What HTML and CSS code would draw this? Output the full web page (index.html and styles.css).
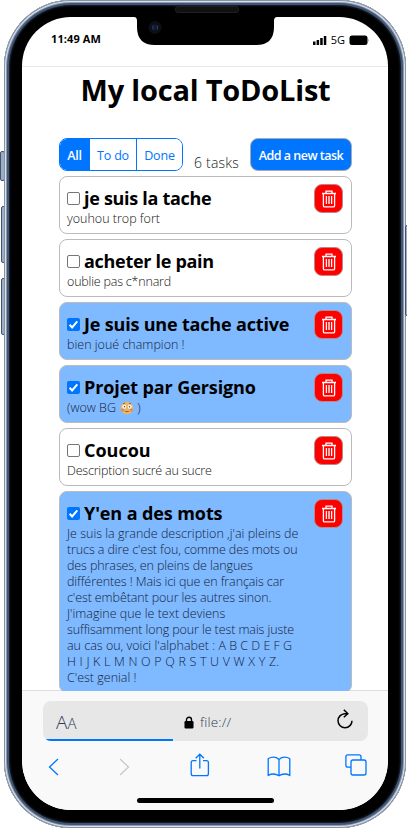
FILE: index.html
```
<!DOCTYPE html>
<html lang="fr">
<head>
<meta charset="utf-8">
<title>My local ToDoList</title>
<link rel="stylesheet" href="styles.css">
</head>
<body>
<svg class="defs" width="0" height="0">
  <symbol id="trash" viewBox="0 0 16 18"><path d="M1 3.500h14M5 3.200V1.100h6v2.100M2.400 3.500v12.200c0 .8.5 1.200 1.300 1.200h8.600c.8 0 1.300-.4 1.300-1.200V3.500M5.400 6v8M8 6v8M10.600 6v8" fill="none" stroke="#fff" stroke-width="1.300"/></symbol>
  <symbol id="check" viewBox="0 0 13 13"><path d="M2.600 6.800l2.500 2.600 5.200-6" fill="none" stroke="#fff" stroke-width="2"/></symbol>
</svg>
<i class="key mute"></i><i class="key vol-up"></i><i class="key vol-down"></i>
<div class="phone">
  <div class="speaker"></div>
  <div class="screen">
    <svg class="notch" width="143" height="29" viewBox="0 0 143 29">
      <path d="M0 0q3 0 3 4v6q0 18 18 18h101q18 0 18-18v-6q0-4 3-4z"/>
      <circle cx="21" cy="10.500" r="6.500" fill="#0c0f14"/><circle cx="21" cy="10.500" r="3.300" fill="#101a2c"/><path d="M19 8.500v4M23.500 8.500v4" stroke="#2c4070" stroke-width="1"/>
    </svg>
    <header class="status">
      <span class="time">11:49 AM</span>
      <span class="signal">
        <svg width="14" height="9" viewBox="0 0 14 9"><path d="M0 5.500h2.500V9H0zM3.600 4h2.500v5H3.600zM7.200 2h2.500v7H7.200zM10.800 0h2.500v9h-2.500z"/></svg>
        <span class="net">5G</span>
        <svg width="21" height="11" viewBox="0 0 21 11"><rect x=".5" y=".5" width="18" height="9.500" rx="2.500"/><path d="M19.300 3.500q1.500 1.700 0 3.500z" fill="#888"/></svg>
      </span>
    </header>
    <main>
      <h1>My local ToDoList</h1>
      <div class="toolbar">
        <div class="filters"><button class="on">All</button><button class="todo">To do</button><button class="done-tab">Done</button></div>
        <span class="count">6 tasks</span>
        <button class="add"><span>Add a new task</span></button>
      </div>
      <section class="list">
        <article class="card"><div class="text"><h2><i class="box"></i><span class="tight">je suis la tache</span></h2><p>youhou trop fort</p></div><button class="del"><svg width="16" height="18"><use href="#trash"/></svg></button></article>
        <article class="card"><div class="text"><h2><i class="box"></i><span class="tight">acheter le pain</span></h2><p class="snug">oublie pas c*nnard</p></div><button class="del"><svg width="16" height="18"><use href="#trash"/></svg></button></article>
        <article class="card done"><div class="text"><h2><i class="box"><svg width="13" height="13"><use href="#check"/></svg></i><span class="mid">Je suis une tache active</span></h2><p>bien joué champion !</p></div><button class="del"><svg width="16" height="18"><use href="#trash"/></svg></button></article>
        <article class="card done"><div class="text"><h2><i class="box"><svg width="13" height="13"><use href="#check"/></svg></i><span class="loose">Projet par Gersigno</span></h2><p>(wow BG <svg class="face" width="14" height="14" viewBox="0 0 14 14"><circle cx="7" cy="7" r="6.300" fill="#e9b764"/><circle cx="2.800" cy="9" r="1.700" fill="#e9865c"/><circle cx="11.200" cy="9" r="1.700" fill="#e9865c"/><circle cx="4.300" cy="5.800" r="2" fill="#fff"/><circle cx="9.700" cy="5.800" r="2" fill="#fff"/><circle cx="4.500" cy="5.800" r=".8" fill="#543"/><circle cx="9.500" cy="5.800" r=".8" fill="#543"/><path d="M5.200 10.500h3.600M3 2.700l2-.6M9 2.100l2 .6" stroke="#76502f" stroke-width=".8"/></svg>)</p></div><button class="del"><svg width="16" height="18"><use href="#trash"/></svg></button></article>
        <article class="card"><div class="text"><h2><i class="box"></i><span>Coucou</span></h2><p class="snug">Description sucré au sucre</p></div><button class="del"><svg width="16" height="18"><use href="#trash"/></svg></button></article>
        <article class="card done long"><div class="text"><h2><i class="box"><svg width="13" height="13"><use href="#check"/></svg></i><span class="loose">Y'en a des mots</span></h2><p class="body">Je suis la grande description ,j'ai pleins de<br><span class="closer">trucs a dire c'est fou, comme des mots ou</span><br><span class="closer">des phrases, en pleins de langues</span><br><span class="closer">différentes ! Mais ici que en français car</span><br><span class="closer">c'est embêtant pour les autres sinon.</span><br>J'imagine que le text deviens<br><span class="closer">suffisamment long pour le test mais juste</span><br>au cas ou, voici l'alphabet : A B C D E F G<br><span class="abc">H I J K L M N O P Q R S T U V W X Y Z.</span><br>C'est genial !</p></div><button class="del"><svg width="16" height="18"><use href="#trash"/></svg></button></article>
      </section>
    </main>
    <footer class="browser">
      <div class="url">
        <span class="aa">A<small>A</small></span>
        <span class="address"><svg width="10" height="13" viewBox="0 0 10 13"><rect x=".5" y="5" width="9" height="7.500" rx="1.200"/><path d="M2.500 6V3.700a2.500 2.500 0 0 1 5 0V6" fill="none" stroke="#000" stroke-width="1.400"/></svg><span>file://</span></span>
        <svg class="reload" width="18" height="20" viewBox="0 0 18 20"><path d="M11.500 4.700H8.800A7 7 0 1 0 16 11.700M7.800 .8l4 3.900-4 3.600" fill="none" stroke="#000" stroke-width="1.500"/></svg>
        <i class="progress"></i>
      </div>
      <nav>
        <svg width="11" height="18" viewBox="0 0 11 18"><path d="M10 1L1.500 9l8.500 8"/></svg>
        <svg class="off" width="11" height="18" viewBox="0 0 11 18"><path d="M1 1l8.500 8L1 17"/></svg>
        <svg class="share" width="20" height="24" viewBox="0 0 20 24"><path d="M6.500 7.600H3Q1.200 7.600 1.200 9.500v11.300Q1.200 22.700 3 22.700h13.500q1.900 0 1.900-1.900V9.500q0-1.900-1.900-1.900H13M9.800 15.500V1.500M5.700 5.300l4.100-4.100 4.100 4.100"/></svg>
        <svg class="book" width="24" height="21" viewBox="0 0 24 21"><path d="M12 3.500Q9.500 1.200 6.500 1.200T1.200 2.800v16.500q2.500-1.300 5.300-1.300T12 19.700q2.700-1.700 5.500-1.700t5.300 1.300V2.800q-2.300-1.600-5.300-1.600T12 3.500zM12 3.500v16.200"/></svg>
        <svg width="22" height="22" viewBox="0 0 22 22"><rect x="6" y="6" width="15" height="15" rx="2"/><path d="M6 13.200H2.800q-1.900 0-1.900-1.900V2.800Q.9.900 2.800.9h11.300q1.900 0 1.900 1.900V6"/></svg>
      </nav>
      <div class="home"></div>
    </footer>
  </div>
</div>
<i class="key power"></i>
</body>
</html>
```

FILE: styles.css
```
* { box-sizing: border-box; }
body { margin: 0; width: 407px; height: 828px; position: relative; overflow: hidden; background: #fff; font-family: "Open Sans", "Noto Sans", sans-serif; color: #000; }
button { font: inherit; margin: 0; padding: 0; }
h1, h2, p { margin: 0; white-space: nowrap; }
svg { display: block; flex: none; }
.defs { position: absolute; }

/* handset */
.phone { position: relative; width: 402px; height: 828px; margin-left: 4px; padding: 17px 19px 18px 18px; border-radius: 67px; background: #000; box-shadow: inset 0 0 0 1px #8a92a0, inset 0 0 0 2px #d9e3ee, inset 0 0 0 3px #8a9bb4, inset 0 0 0 5px #435570, inset 0 0 2px 6px #1b2535; }
.speaker { position: absolute; left: 171px; top: 6px; width: 64px; height: 7px; background: #111; border: 1px solid #202020; border-radius: 3px; }
.key { position: absolute; width: 5px; border: 1px solid #46536d; border-radius: 2px; background: #9badc6; }
.mute { left: 0; top: 151px; height: 30px; }
.vol-up { left: 1px; top: 206px; height: 57px; }
.vol-down { left: 1px; top: 278px; height: 57px; }
.power { left: 405px; top: 225px; height: 91px; }
.screen { position: relative; display: flex; flex-direction: column; width: 366px; height: 793px; border-radius: 49px; overflow: hidden; background: #fff; }
.notch { position: absolute; left: 112px; top: 0; z-index: 1; }

.status { display: flex; justify-content: space-between; height: 50px; flex: none; padding: 13px 18px 0 29px; border-bottom: 1px solid #e8e8e8; font-size: 11px; line-height: 18px; }
.time { font-weight: 700; letter-spacing: .1px; }
.signal { display: flex; align-items: center; height: 20px; gap: 4px; }
.net { line-height: 20px; }

main { height: 624px; flex: none; padding: 0 36px 0 37px; overflow: hidden; margin-bottom: -1px; position: relative; }
h1 { height: 48px; line-height: 46px; margin-bottom: 23px; text-align: center; font-size: 29px; font-weight: 700; letter-spacing: -.2px; }
.toolbar { display: flex; align-items: flex-end; height: 33px; margin-bottom: 5px; }
.filters { display: flex; width: 124px; height: 33px; border: 1px solid #0075ff; border-radius: 8px; overflow: hidden; }
.filters button { border: 0; background: #fff; color: #0075ff; font-size: 12.500px; letter-spacing: -.2px; padding-top: 1px; }
.filters button + button { border-left: 1px solid #0075ff; }
.filters .on { width: 29px; background: #0075ff; color: #fff; font-weight: 600; }
.filters .todo { width: 47px; }
.filters .done-tab { flex: 1; }
.count { margin: 0 0 -2px 11px; font-size: 14px; line-height: 20px; font-weight: 300; letter-spacing: .2px; color: #222; }
.add { width: 102px; height: 33px; margin-left: auto; padding-top: 1px; border: 1px solid #aaa; border-radius: 8px; background: #0075ff; color: #fff; font-size: 12.500px; font-weight: 600; letter-spacing: -.5px; white-space: nowrap; }

.list { display: flex; flex-direction: column; gap: 5px; }
.card { display: flex; justify-content: space-between; width: 293px; height: 58px; flex: none; padding: 8px 8px 8px 7px; border: 1px solid #bbb; border-radius: 8px; background: #fff; }
.card.done { background: #7fb9ff; }
.card.long { height: 202px; }
.card h2 { display: flex; align-items: center; height: 26px; font-size: 18px; line-height: 26px; font-weight: 700; }
.card h2 .tight { letter-spacing: -.3px; }
.card h2 .mid { letter-spacing: -.18px; }
.card h2 .loose { letter-spacing: -.1px; }
.card p { font-size: 12.500px; line-height: 16px; font-weight: 300; letter-spacing: 0; color: #111; }
.card p.snug { letter-spacing: -.2px; }
.card p .closer { letter-spacing: -.1px; }
.card p .abc { letter-spacing: .19px; }
.card.done p { color: #14233a; }
.text { width: 232px; }
.box { width: 13px; height: 13px; margin: 1px 4px 0 0; flex: none; border: 1px solid #767676; border-radius: 2px; background: #fff; }
.done .box { border: 0; background: #0075ff; }
.del { display: flex; align-items: center; justify-content: center; width: 29px; height: 29px; margin-top: -1px; flex: none; border: 1px solid #b88; border-radius: 8px; background: #f00; }
.face { display: inline-block; vertical-align: -3px; margin: 0 3px 0 1px; }

/* browser bar */
.browser { flex: 1; padding: 10px 20px 0 21px; border-top: 1px solid #dcdcdc; background: #f9f9f9; }
.url { position: relative; display: flex; align-items: center; height: 40px; padding: 0 14px 0 13px; border-radius: 8px; background: #e7e7e7; overflow: hidden; color: #2d3a54; }
.aa { width: 128px; padding-top: 1px; font-size: 19px; font-weight: 300; }
.aa small { font-size: 15px; }
.address { display: flex; align-items: center; gap: 6px; padding-top: 2px; font-size: 13.500px; font-weight: 300; letter-spacing: .2px; }
.reload { margin: -4px 0 0 auto; }
.progress { position: absolute; left: 2px; bottom: 0; width: 128px; height: 2px; background: #0075ff; }
nav { display: flex; align-items: center; justify-content: space-between; height: 24px; margin-top: 12px; padding: 0 1px 0 5px; }
nav svg { fill: none; stroke: #0075ff; stroke-width: 1.300; }
nav svg:first-child, nav .off, nav .book { margin-top: 3px; }
nav .off { stroke: #c8c8c8; margin-left: 6px; }
nav .share { margin-left: 5px; }
nav .book { margin-left: 3px; }
.home { width: 137px; height: 5px; margin: 21px 0 0 94px; border-radius: 3px; background: #000; }
```
